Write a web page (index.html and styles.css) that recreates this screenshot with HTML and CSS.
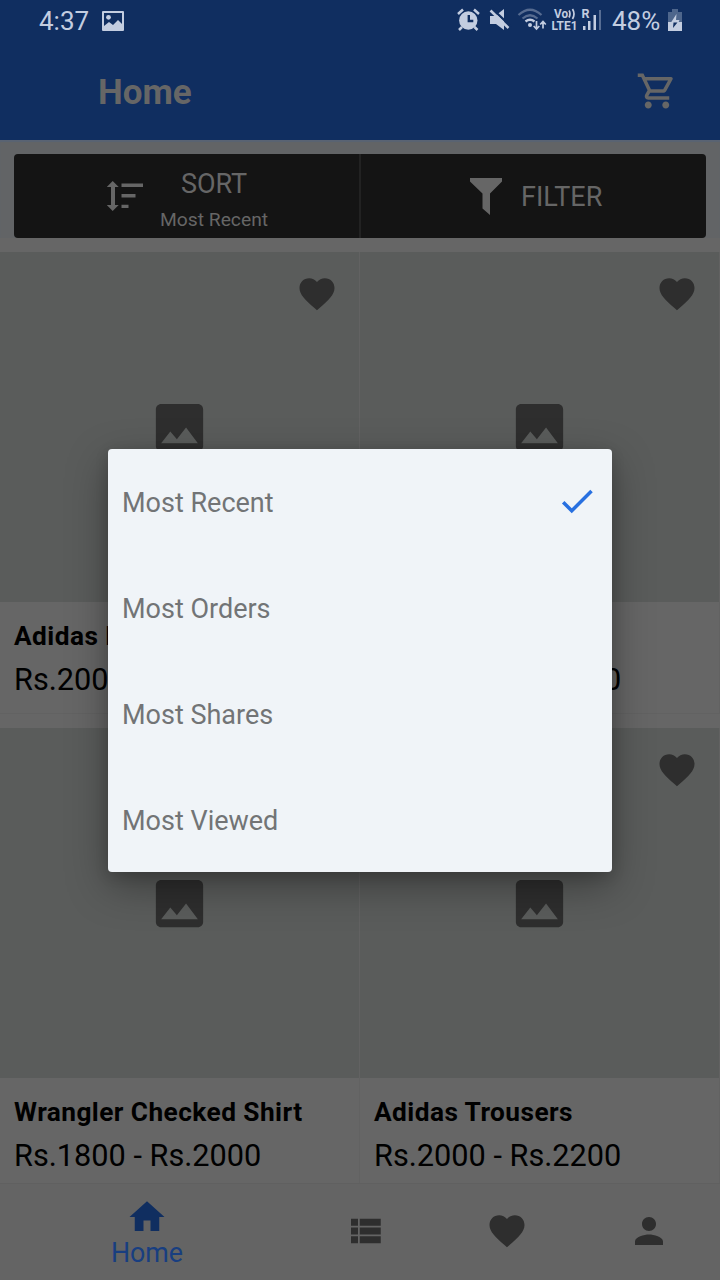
FILE: index.html
```
<!DOCTYPE html>
<html lang="en">
<head>
<meta charset="utf-8">
<title>Home</title>
<link rel="stylesheet" href="styles.css">
</head>
<body>
<svg class="defs" aria-hidden="true">
  <symbol id="heart" viewBox="0 0 24 24"><path d="M12 21.35l-1.45-1.32C5.4 15.36 2 12.28 2 8.5 2 5.42 4.42 3 7.5 3c1.74 0 3.41.81 4.5 2.09C13.09 3.81 14.76 3 16.5 3 19.58 3 22 5.42 22 8.5c0 3.78-3.4 6.86-8.55 11.54z"/></symbol>
  <symbol id="image" viewBox="0 0 24 24"><path d="M21 19V5c0-1.100-.9-2-2-2H5c-1.100 0-2 .9-2 2v14c0 1.100.9 2 2 2h14c1.100 0 2-.9 2-2zM8.500 13.500l2.500 3.010L14.500 12l4.500 6H5z"/></symbol>
</svg>
<div class="screen">
  <header class="top">
    <div class="status">
      <span class="clock">4:37</span>
      <svg class="s-photo" width="22" height="20" viewBox="0 0 22 20"><path fill-rule="evenodd" d="M1 0h20a1 1 0 0 1 1 1v18a1 1 0 0 1-1 1H1a1 1 0 0 1-1-1V1a1 1 0 0 1 1-1zM2 2v13l5-4 4 3 5-5 4 4V2z"/><circle cx="6.500" cy="6.300" r="2.400"/></svg>
      <svg class="s-icons" width="150" height="26" viewBox="455 6 150 26">
        <g><circle cx="468.300" cy="20.500" r="9.200"/><path d="M462 27l-3 3M474.500 27l3 3" class="st"/><path d="M458 14l5-4.500M479 14l-5-4.500" class="st"/><path d="M468.800 15v6h4.500" class="cut"/></g>
        <path d="M490 16h5l9-7v21l-8-6h-6z"/><path d="M491.500 8L511 26.500" class="cut"/><path d="M490.500 10.500L508.500 28" class="st"/>
        <g class="dim"><path d="M518.500 15q11.500-10.500 23 0M522.500 18.500q7.500-6.500 15 0"/></g><path d="M525.500 21.500q4.500-3.500 9 0" class="st"/><circle cx="530" cy="25" r="2"/>
        <path d="M536.500 21v7.500M533.700 26l2.800 3 2.800-3M543 28.500V22M540.200 24.500l2.800-3 2.800 3" class="thin"/>
        <text x="554" y="18" class="vo" textLength="14" lengthAdjust="spacingAndGlyphs">Vo</text><path d="M569 10.500q2 3 0 7M572.500 9q3 5 0 10" class="thin"/>
        <text x="551.500" y="30" class="lte" textLength="26" lengthAdjust="spacingAndGlyphs">LTE1</text>
        <text x="581.500" y="18" class="vo">R</text>
        <path d="M583 26h2.500v4H583zM588 21h2.500v9H588zM593.500 15h2.500v15h-2.500z"/><path d="M599 10h2v20h-2z" opacity=".4"/>
      </svg>
      <span class="pct">48%</span>
      <svg class="s-batt" width="14" height="22" viewBox="0 0 14 22"><path d="M4 0h6v3h4v10H0V3h4z" opacity=".35"/><path d="M0 13h14v9H0z"/><path d="M8.500 5L3 13.500h4l-1 1h4l1.500-3.500H8z"/><path d="M5.500 13.500h4L5 19z" fill="#102e60"/></svg>
    </div>
    <div class="appbar">
      <h1>Home</h1>
      <svg class="cart" width="42" height="42" viewBox="0 0 24 24"><path d="M15.550 13c.75 0 1.410-.41 1.750-1.030l3.580-6.490A.996.996 0 0 0 20.010 4H5.210l-.94-2H1v2h2l3.600 7.590-1.350 2.440C4.520 15.370 5.480 17 7 17h12v-2H7l1.100-2h7.450zM6.160 6h12.150l-2.760 5H8.530L6.160 6zM7 18c-1.100 0-1.990.9-1.990 2S5.900 22 7 22s2-.9 2-2-.9-2-2-2zm10 0c-1.100 0-1.990.9-1.990 2s.89 2 1.990 2 2-.9 2-2-.9-2-2-2z"/></svg>
    </div>
  </header>

  <div class="tools">
    <div class="toolbar">
      <div class="tool sort">
        <svg width="36" height="30" viewBox="0 0 36 30"><path d="M5.700 0l6 6H8v18h3.700l-6 6-6-6H4V6H-.3zM14.500 2.500H36V6H14.500zM14.500 13H28.500v3.500H14.500zM14.500 23.700h7V27h-7z"/></svg>
        <div class="sort-text"><span class="tool-name">SORT</span><span class="tool-sub">Most Recent</span></div>
      </div>
      <div class="tool filter">
        <svg width="32" height="37" viewBox="0 0 32 37"><path d="M0 0h32v3.500L20 15.500V37l-7.500-6.500v-15L0 3.500z"/></svg>
        <span class="tool-name">FILTER</span>
      </div>
    </div>
  </div>

  <main class="grid">
    <article class="card"><div class="photo"><svg class="fav"><use href="#heart"/></svg><svg class="ph"><use href="#image"/></svg></div><h2>Adidas Running</h2><p>Rs.2000 - Rs.2500</p></article>
    <article class="card"><div class="photo"><svg class="fav"><use href="#heart"/></svg><svg class="ph"><use href="#image"/></svg></div><h2>Shirt</h2><p>Rs.1000 - Rs.1200</p></article>
    <article class="card"><div class="photo"><svg class="fav"><use href="#heart"/></svg><svg class="ph"><use href="#image"/></svg></div><h2>Wrangler Checked Shirt</h2><p>Rs.1800 - Rs.2000</p></article>
    <article class="card"><div class="photo"><svg class="fav"><use href="#heart"/></svg><svg class="ph"><use href="#image"/></svg></div><h2>Adidas Trousers</h2><p>Rs.2000 - Rs.2200</p></article>
  </main>

  <nav class="tabs">
    <div class="tab active"><svg viewBox="0 0 24 24"><path d="M10 20v-6h4v6h5v-8h3L12 3 2 12h3v8z"/></svg><span>Home</span></div>
    <div class="tab"><svg viewBox="0 0 24 24"><path d="M4 14h4v-4H4v4zm0 5h4v-4H4v4zM4 9h4V5H4v4zm5 5h12v-4H9v4zm0 5h12v-4H9v4zM9 5v4h12V5H9z"/></svg></div>
    <div class="tab"><svg><use href="#heart"/></svg></div>
    <div class="tab"><svg viewBox="0 0 24 24"><path d="M12 12c2.210 0 4-1.790 4-4s-1.790-4-4-4-4 1.790-4 4 1.790 4 4 4zm0 2c-2.670 0-8 1.340-8 4v2h16v-2c0-2.660-5.330-4-8-4z"/></svg></div>
  </nav>

  <div class="dialog" role="dialog">
    <div class="option"><span>Most Recent</span><svg width="42" height="42" viewBox="0 0 24 24"><path d="M9 16.170L4.830 12l-1.420 1.410L9 19 21 7l-1.410-1.410z"/></svg></div>
    <div class="option"><span>Most Orders</span></div>
    <div class="option"><span>Most Shares</span></div>
    <div class="option"><span>Most Viewed</span></div>
  </div>
</div>
</body>
</html>
```
FILE: styles.css
```
* { box-sizing: border-box; margin: 0; padding: 0; }
body { font-family: Roboto, "Liberation Sans", sans-serif; background: #666; }
svg { display: block; flex: none; }
.defs { position: absolute; width: 0; height: 0; }
.screen { position: relative; width: 720px; height: 1280px; overflow: hidden; display: flex; flex-direction: column; background: #666; }

.top { height: 140px; flex: none; background: #102e60; }
.status { height: 42px; display: flex; align-items: center; padding-left: 39px; color: #c3cde0; fill: #c3cde0; font-size: 26px; white-space: nowrap; }
.clock { width: 63px; }
.s-photo { margin-right: 331px; margin-top: -1px; }
.s-icons { margin-right: 7px; margin-top: -4px; }
.pct { width: 56px; }
.s-batt { margin-top: -2px; }
.st { fill: none; stroke: #c3cde0; stroke-width: 2.5; }
.thin { fill: none; stroke: #c3cde0; stroke-width: 1.7; }
.cut { fill: none; stroke: #102e60; stroke-width: 2.4; }
.dim { fill: none; stroke: #566b90; stroke-width: 2.2; }
.vo { font-size: 12.5px; font-weight: 700; }
.lte { font-size: 12.5px; font-weight: 700; }
.appbar { height: 98px; display: flex; align-items: center; justify-content: space-between; padding: 0 42px 0 98px; }
.appbar h1 { font-size: 35px; line-height: 41px; font-weight: 700; color: #666; padding-top: 3px; }
.cart { fill: #666; }

.tools { height: 98px; flex: none; padding: 14px 14px 0; background: #626466; box-shadow: inset 0 2px 1px #596373; }
.toolbar { height: 84px; display: flex; background: #141414; border-radius: 4px; color: #666; fill: #666; }
.tool { display: flex; align-items: center; }
.sort { width: 347px; border-right: 2px solid #222; padding-left: 93px; gap: 17px; }
.sort-text { display: flex; flex-direction: column; align-items: center; padding-top: 10px; }
.filter { flex: 1; padding-left: 109px; gap: 19px; }
.tool-name { font-size: 27px; line-height: 36px; padding-top: 1px; }
.tool-sub { font-size: 19.25px; line-height: 35px; }

.grid { height: 945px; flex: none; padding-top: 14px; display: grid; grid-template-columns: 360px 360px; grid-auto-rows: 462px; row-gap: 14px; overflow: hidden; }
.card { border-right: 1px solid #626262; border-bottom: 1px solid #626262; color: #000; white-space: nowrap; overflow: hidden; }
.photo { height: 350px; background: #5a5c5b; display: grid; place-items: center; grid-template: 100% / 100%; }
.photo svg { grid-area: 1 / 1; fill: #2e2e2e; }
.fav { width: 42px; height: 42px; place-self: start end; margin: 21px 21px 0 0; }
.ph { width: 63px; height: 63px; }
.card h2 { font-size: 26.25px; line-height: 36px; font-weight: 700; letter-spacing: .44px; padding: 16px 0 0 14px; }
.card p { font-size: 30.7px; line-height: 40px; padding: 6px 0 0 14px; }

.tabs { height: 97px; flex: none; display: flex; background: #646464; border-top: 1px solid #606060; }
.tab { width: 142px; display: flex; flex-direction: column; align-items: center; padding-top: 26px; fill: #2e2e2e; }
.tab svg { width: 42px; height: 42px; }
.tab.active { width: 294px; padding-top: 12px; fill: #102e60; color: #183e80; font-size: 26.8px; line-height: 30px; }

.dialog { position: absolute; left: 108px; top: 449px; width: 504px; height: 423px; background: #f0f4f8; border-radius: 4px; box-shadow: 0 14px 40px rgba(0,0,0,.34), 0 4px 14px rgba(0,0,0,.14); }
.option { height: 106px; display: flex; align-items: center; justify-content: space-between; padding: 2px 14px 0 14px; font-size: 27px; color: #727476; }
.option svg { fill: #2870e0; margin-top: -4px; }
```
